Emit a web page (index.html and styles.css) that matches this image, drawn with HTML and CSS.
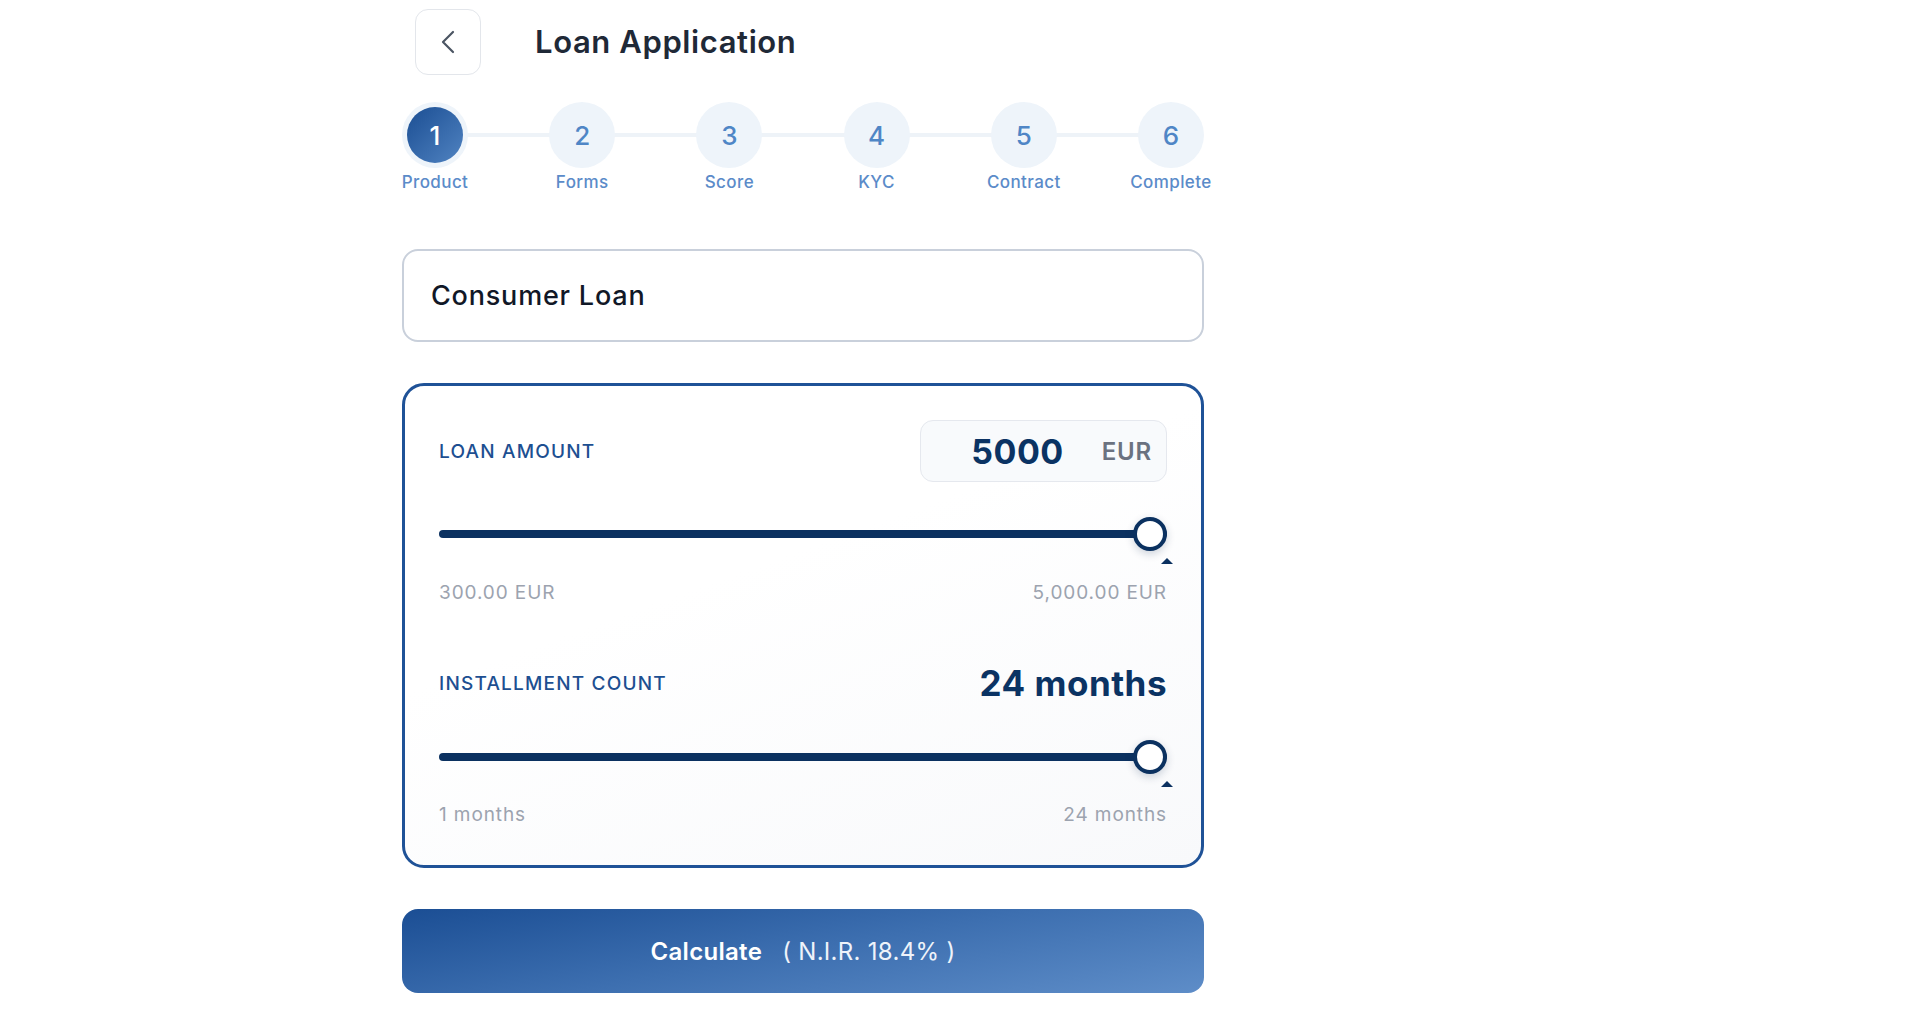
FILE: index.html
```html
<!DOCTYPE html>
<html lang="en">
<head>
    <meta charset="UTF-8">
    <meta name="viewport" content="width=device-width, initial-scale=1.0">
    <title>Loan Application</title>
    <link rel="stylesheet" href="styles.css">
</head>
<body>
    <div class="page">
        <header class="top-bar">
            <button class="back-button" aria-label="Back">
                <svg width="14" height="24" viewBox="0 0 14 24" fill="none">
                    <path d="M12 2 L2 12 L12 22" stroke="#4b5563" stroke-width="2.2" stroke-linecap="round" stroke-linejoin="round"/>
                </svg>
            </button>
            <h1 class="page-title">Loan Application</h1>
        </header>

        <ol class="stepper">
            <li class="step active"><span class="step-dot"><span class="step-num">1</span></span><span class="step-label">Product</span></li>
            <li class="step"><span class="step-dot"><span class="step-num">2</span></span><span class="step-label">Forms</span></li>
            <li class="step"><span class="step-dot"><span class="step-num">3</span></span><span class="step-label">Score</span></li>
            <li class="step"><span class="step-dot"><span class="step-num">4</span></span><span class="step-label">KYC</span></li>
            <li class="step"><span class="step-dot"><span class="step-num">5</span></span><span class="step-label">Contract</span></li>
            <li class="step"><span class="step-dot"><span class="step-num">6</span></span><span class="step-label">Complete</span></li>
        </ol>

        <div class="product-select">Consumer Loan</div>

        <div class="calc-card">
            <section class="calc-section">
                <div class="calc-head amount-head">
                    <span class="calc-label">LOAN AMOUNT</span>
                    <div class="amount-box">
                        <span class="amount-value">5000</span>
                        <span class="amount-cur">EUR</span>
                    </div>
                </div>
                <div class="slider">
                    <div class="slider-track"></div>
                    <div class="slider-thumb"></div>
                    <div class="slider-tip"></div>
                </div>
                <div class="slider-range">
                    <span>300.00 EUR</span>
                    <span>5,000.00 EUR</span>
                </div>
            </section>

            <section class="calc-section second">
                <div class="calc-head">
                    <span class="calc-label">INSTALLMENT COUNT</span>
                    <span class="months-value">24 months</span>
                </div>
                <div class="slider">
                    <div class="slider-track"></div>
                    <div class="slider-thumb"></div>
                    <div class="slider-tip"></div>
                </div>
                <div class="slider-range">
                    <span>1 months</span>
                    <span>24 months</span>
                </div>
            </section>
        </div>

        <button class="calc-button">
            <span class="calc-button-main">Calculate</span>
            <span class="calc-button-rate">( N.I.R. 18.4% )</span>
        </button>
    </div>
</body>
</html>
```

FILE: styles.css
```css
body {
    margin: 0;
    background: #ffffff;
    font-family: Inter, "Noto Sans", sans-serif;
    color: #111827;
}

.page {
    width: 802px;
    margin-left: 402px;
    padding-top: 9px;
}

.top-bar {
    display: flex;
    align-items: center;
    padding-left: 13px;
}

.back-button {
    width: 66px;
    height: 66px;
    border: 1.5px solid #e3e6eb;
    border-radius: 13px;
    background: #ffffff;
    display: flex;
    align-items: center;
    justify-content: center;
    padding: 0;
}

.page-title {
    margin: -2px 0 0 54px;
    font-size: 31px;
    font-weight: 600;
    color: #1f2937;
    letter-spacing: 0.6px;
}

.stepper {
    list-style: none;
    margin: 27px 0 0;
    padding: 0;
    display: flex;
    justify-content: space-between;
    position: relative;
}

.stepper::before {
    content: "";
    position: absolute;
    left: 33px;
    right: 33px;
    top: 31px;
    height: 4px;
    background: #eef3f8;
}

.step {
    width: 66px;
    display: flex;
    flex-direction: column;
    align-items: center;
    position: relative;
}

.step-dot {
    width: 66px;
    height: 66px;
    border-radius: 50%;
    background: #eef4fa;
    display: flex;
    align-items: center;
    justify-content: center;
}

.step-num {
    width: 56px;
    height: 56px;
    border-radius: 50%;
    display: flex;
    align-items: center;
    justify-content: center;
    font-size: 26px;
    font-weight: 500;
    color: #4f86c6;
}

.step.active .step-num {
    background: linear-gradient(135deg, #1b4e93, #5083c1);
    color: #ffffff;
}

.step-label {
    margin-top: 4px;
    white-space: nowrap;
    font-size: 17px;
    font-weight: 500;
    color: #5b8bc9;
    letter-spacing: 0.4px;
}

.product-select {
    margin-top: 57px;
    height: 89px;
    border: 2px solid #c9d0db;
    border-radius: 16px;
    padding-left: 27px;
    display: flex;
    align-items: center;
    font-size: 27px;
    font-weight: 500;
    color: #111827;
    letter-spacing: 0.8px;
}

.calc-card {
    margin-top: 41px;
    border: 3px solid #1f5297;
    border-radius: 22px;
    padding: 34px 34px 38px;
    background: linear-gradient(160deg, #ffffff 40%, #f8f9fb);
}

.calc-head {
    display: flex;
    justify-content: space-between;
    align-items: center;
}

.amount-head {
    height: 62px;
}

.calc-label {
    font-size: 19px;
    font-weight: 500;
    color: #1d4f91;
    letter-spacing: 1.2px;
}

.amount-box {
    width: 247px;
    height: 62px;
    box-sizing: border-box;
    border: 1.5px solid #e5e8ee;
    border-radius: 13px;
    background: #f8fafc;
    display: flex;
    align-items: center;
    justify-content: flex-end;
    padding-right: 14px;
    gap: 38px;
}

.amount-value {
    font-size: 34px;
    font-weight: 700;
    color: #0b3363;
    letter-spacing: 0.5px;
}

.amount-cur {
    font-size: 24px;
    font-weight: 600;
    color: #6b7280;
    letter-spacing: 0.8px;
}

.months-value {
    font-size: 35px;
    font-weight: 700;
    color: #0b3363;
    line-height: 44px;
    letter-spacing: 0.5px;
}

.slider {
    position: relative;
    height: 34px;
    margin-top: 35px;
    display: flex;
    align-items: center;
}

.slider-track {
    flex: 1;
    height: 8px;
    border-radius: 4px;
    background: #0b3160;
}

.slider-thumb {
    position: absolute;
    right: 0;
    top: 0;
    width: 34px;
    height: 34px;
    box-sizing: border-box;
    border: 4px solid #0b3160;
    border-radius: 50%;
    background: #ffffff;
    box-shadow: 0 3px 8px rgba(15, 40, 80, 0.2);
}

.slider-tip {
    position: absolute;
    right: -6px;
    top: 41px;
    width: 0;
    height: 0;
    border-left: 6px solid transparent;
    border-right: 6px solid transparent;
    border-bottom: 6px solid #0b3160;
}

.slider-range {
    margin-top: 30px;
    display: flex;
    justify-content: space-between;
    font-size: 19px;
    color: #9ca3af;
    line-height: 24px;
    letter-spacing: 0.9px;
}

.calc-section.second {
    margin-top: 56px;
}

.calc-section.second .slider-range {
    margin-top: 29px;
}

.calc-button {
    margin-top: 41px;
    width: 100%;
    height: 84px;
    border: none;
    border-radius: 16px;
    background: linear-gradient(170deg, #1b4e94 0%, #3d6fb0 50%, #5e8dc8 100%);
    color: #ffffff;
    font-family: inherit;
    font-size: 24px;
    display: flex;
    align-items: center;
    justify-content: center;
    gap: 20px;
    letter-spacing: 0.3px;
}

.calc-button-main {
    font-weight: 600;
}

.calc-button-rate {
    font-weight: 400;
    color: #eef3fa;
}
```
